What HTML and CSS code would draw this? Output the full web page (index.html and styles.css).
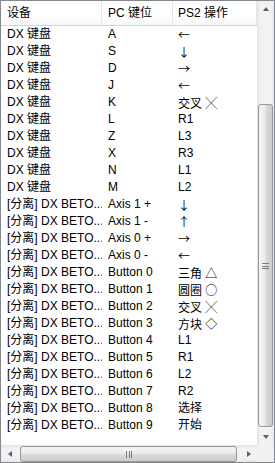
FILE: index.html
```html
<!DOCTYPE html>
<html lang="zh-CN">
<head>
  <meta charset="UTF-8" />
  <title>按键映射</title>
  <link rel="stylesheet" href="styles.css">
</head>
<body>
  <div class="list">
    <div class="view">
      <div class="head">
        <div class="hcell">设备</div>
        <div class="hcell">PC 键位</div>
        <div class="hcell">PS2 操作</div>
      </div>
      <div class="row"><span>DX 键盘</span><span>A</span><span><i class="sym">←</i></span></div>
      <div class="row"><span>DX 键盘</span><span>S</span><span><i class="sym">↓</i></span></div>
      <div class="row"><span>DX 键盘</span><span>D</span><span><i class="sym">→</i></span></div>
      <div class="row"><span>DX 键盘</span><span>J</span><span><i class="sym">←</i></span></div>
      <div class="row"><span>DX 键盘</span><span>K</span><span>交叉 <i class="sym">╳</i></span></div>
      <div class="row"><span>DX 键盘</span><span>L</span><span>R1</span></div>
      <div class="row"><span>DX 键盘</span><span>Z</span><span>L3</span></div>
      <div class="row"><span>DX 键盘</span><span>X</span><span>R3</span></div>
      <div class="row"><span>DX 键盘</span><span>N</span><span>L1</span></div>
      <div class="row"><span>DX 键盘</span><span>M</span><span>L2</span></div>
      <div class="row"><span>[分离] DX BETO...</span><span>Axis 1 +</span><span><i class="sym">↓</i></span></div>
      <div class="row"><span>[分离] DX BETO...</span><span>Axis 1 -</span><span><i class="sym">↑</i></span></div>
      <div class="row"><span>[分离] DX BETO...</span><span>Axis 0 +</span><span><i class="sym">→</i></span></div>
      <div class="row"><span>[分离] DX BETO...</span><span>Axis 0 -</span><span><i class="sym">←</i></span></div>
      <div class="row"><span>[分离] DX BETO...</span><span>Button 0</span><span>三角 <i class="sym">△</i></span></div>
      <div class="row"><span>[分离] DX BETO...</span><span>Button 1</span><span>圆圈 <i class="sym">○</i></span></div>
      <div class="row"><span>[分离] DX BETO...</span><span>Button 2</span><span>交叉 <i class="sym">╳</i></span></div>
      <div class="row"><span>[分离] DX BETO...</span><span>Button 3</span><span>方块 <i class="sym">◇</i></span></div>
      <div class="row"><span>[分离] DX BETO...</span><span>Button 4</span><span>L1</span></div>
      <div class="row"><span>[分离] DX BETO...</span><span>Button 5</span><span>R1</span></div>
      <div class="row"><span>[分离] DX BETO...</span><span>Button 6</span><span>L2</span></div>
      <div class="row"><span>[分离] DX BETO...</span><span>Button 7</span><span>R2</span></div>
      <div class="row"><span>[分离] DX BETO...</span><span>Button 8</span><span>选择</span></div>
      <div class="row"><span>[分离] DX BETO...</span><span>Button 9</span><span>开始</span></div>
    </div>

    <div class="vscroll">
      <div class="arrow"><span class="tri up"></span></div>
      <div class="vtrack">
        <div class="vthumb"><span class="grip-v"></span></div>
      </div>
      <div class="arrow"><span class="tri down"></span></div>
    </div>

    <div class="hscroll">
      <div class="arrow"><span class="tri left"></span></div>
      <div class="htrack">
        <div class="hthumb"><span class="grip-h"></span></div>
      </div>
      <div class="arrow"><span class="tri right"></span></div>
    </div>

    <div class="corner"></div>
  </div>
</body>
</html>
```

FILE: styles.css
```css
* { box-sizing: border-box; }

body {
  margin: 0;
  font-family: 'Liberation Sans', 'Noto Sans CJK SC', sans-serif;
  font-size: 12px;
  color: #000;
  background: #fff;
}

.list {
  width: 275px;
  height: 463px;
  border: 1px solid #828790;
  display: grid;
  grid-template-columns: 256px 17px;
  grid-template-rows: 444px 17px;
  background: #fff;
}

.view { overflow: hidden; }

.head {
  display: grid;
  grid-template-columns: 101px 71px 84px;
  height: 25px;
  border-bottom: 1px solid #d5d5d5;
  background: linear-gradient(#ffffff, #ffffff 60%, #f6f7f9);
}

.hcell {
  padding: 0 6px;
  line-height: 25px;
  border-right: 1px solid #e3e8ee;
  white-space: nowrap;
  overflow: hidden;
}

.hcell:last-child { padding-left: 5px; }

.row {
  display: grid;
  grid-template-columns: 101px 71px 84px;
  height: 17px;
  line-height: 17px;
}

.row span {
  padding-left: 6px;
  white-space: nowrap;
  overflow: hidden;
}

.row span:last-child { padding-left: 5px; }

.sym {
  font-style: normal;
  font-family: 'Noto Sans CJK SC', sans-serif;
  font-size: 12px;
}

/* scroll bars */
.vscroll {
  display: flex;
  flex-direction: column;
  background: linear-gradient(to right, #e3e3e3, #f2f2f2 20%, #f2f2f2 80%, #e8e8e8);
}

.hscroll {
  display: flex;
  background: linear-gradient(#e3e3e3, #f2f2f2 20%, #f2f2f2 80%, #e8e8e8);
}

.corner { background: #f0f0f0; }

.arrow {
  width: 17px;
  height: 17px;
  flex: none;
  display: flex;
  align-items: center;
  justify-content: center;
}

.tri { width: 0; height: 0; border: 3px solid transparent; }
.tri.up { border-bottom: 4px solid #606060; border-top: 0; margin-top: -2px; }
.tri.down { border-top: 4px solid #606060; border-bottom: 0; }
.tri.left { border-right: 4px solid #606060; border-left: 0; }
.tri.right { border-left: 4px solid #606060; border-right: 0; }

.vtrack {
  flex: 1;
  display: flex;
  flex-direction: column;
  justify-content: flex-end;
  padding: 0 1px 1px 1px;
}

.vthumb {
  height: 323px;
  border: 1px solid #979797;
  border-radius: 3px;
  background: linear-gradient(to right, #f5f5f5, #ebebeb 45%, #d9d9d9 55%, #cdcdcd);
  display: flex;
  align-items: center;
  justify-content: center;
}

.grip-v {
  width: 7px;
  height: 6px;
  border-top: 1px solid #7a7a7a;
  border-bottom: 1px solid #7a7a7a;
  background: linear-gradient(transparent 2px, #7a7a7a 2px, #7a7a7a 3px, transparent 3px);
}

.htrack {
  flex: 1;
  display: flex;
  padding: 1px 3px 0 2px;
}

.hthumb {
  flex: 1;
  border: 1px solid #979797;
  border-radius: 3px;
  background: linear-gradient(#f5f5f5, #ebebeb 45%, #d9d9d9 55%, #cdcdcd);
  display: flex;
  align-items: center;
  justify-content: center;
}

.grip-h {
  width: 6px;
  height: 7px;
  border-left: 1px solid #7a7a7a;
  border-right: 1px solid #7a7a7a;
  background: linear-gradient(to right, transparent 2px, #7a7a7a 2px, #7a7a7a 3px, transparent 3px);
}
```
